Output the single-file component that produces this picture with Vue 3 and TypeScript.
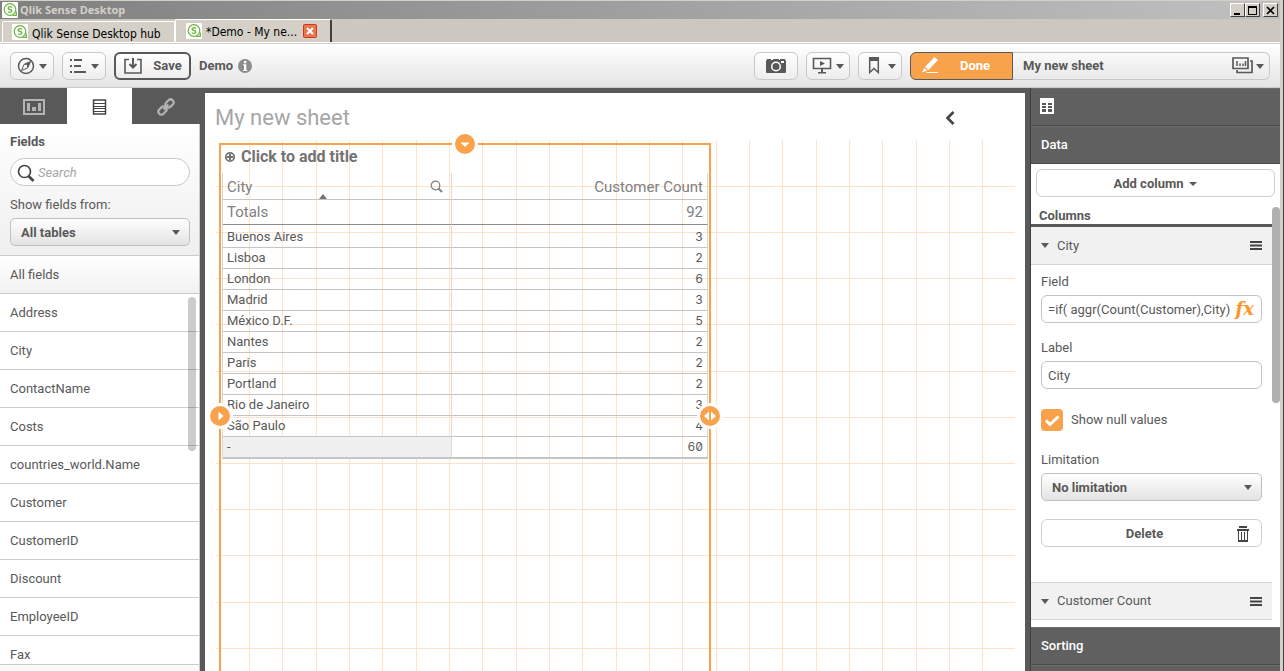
<script setup lang="ts">
import { ref } from 'vue'

interface Row {
  city: string
  count: number
}

const fields: string[] = [
  'Address', 'City', 'ContactName', 'Costs', 'countries_world.Name',
  'Customer', 'CustomerID', 'Discount', 'EmployeeID', 'Fax',
]

const rows: Row[] = [
  { city: 'Buenos Aires', count: 3 },
  { city: 'Lisboa', count: 2 },
  { city: 'London', count: 6 },
  { city: 'Madrid', count: 3 },
  { city: 'México D.F.', count: 5 },
  { city: 'Nantes', count: 2 },
  { city: 'Paris', count: 2 },
  { city: 'Portland', count: 2 },
  { city: 'Rio de Janeiro', count: 3 },
  { city: 'São Paulo', count: 4 },
  { city: '-', count: 60 },
]

const gridColumns = 24
const gridRowHeight = 46.2
const search = ref('')
const fieldExpression = ref('=if( aggr(Count(Customer),City)')
const columnLabel = ref('City')
const showNulls = ref(true)
</script>

<template>
  <div class="window">
    <div class="screen">
      <header class="titlebar">
        <svg class="logo" viewBox="0 0 16 16" aria-hidden="true">
          <rect width="16" height="16" rx="1" fill="#fff" />
          <circle cx="8" cy="7.5" r="5.8" fill="none" stroke="#6cb33f" stroke-width="1.2" />
          <path d="M10.500 13.300h3.800V9.500M10 5.500Q8 4 6.500 5.200Q5.500 6.800 8 7.500Q10.500 8.200 9.500 9.800Q8 11 6 9.700" fill="none" stroke="#6cb33f" stroke-width="1.300" />
        </svg>
        <span class="window-title">Qlik Sense Desktop</span>
        <button class="win-btn" aria-label="Minimize"><svg viewBox="0 0 13 11"><path d="M3 8h6v2H3z" /></svg></button>
        <button class="win-btn" aria-label="Maximize"><svg viewBox="0 0 13 11"><path d="M2 1h9v9H2zM3 3v6h7V3z" fill-rule="evenodd" /></svg></button>
        <button class="win-btn close" aria-label="Close"><svg viewBox="0 0 13 11"><path d="M3 2l7 7M10 2L3 9" stroke="#000" stroke-width="1.700" /></svg></button>
      </header>

      <nav class="tabs">
        <button class="tab">
          <svg class="logo" viewBox="0 0 16 16" aria-hidden="true">
            <rect width="16" height="16" rx="1" fill="#fff" />
            <circle cx="8" cy="7.500" r="5.800" fill="none" stroke="#6cb33f" stroke-width="1.200" />
            <path d="M10.500 13.300h3.800V9.500M10 5.500Q8 4 6.500 5.200Q5.500 6.800 8 7.500Q10.500 8.200 9.500 9.800Q8 11 6 9.700" fill="none" stroke="#6cb33f" stroke-width="1.300" />
          </svg>
          <span>Qlik Sense Desktop hub</span>
        </button>
        <div class="tab active">
          <svg class="logo" viewBox="0 0 16 16" aria-hidden="true">
            <rect width="16" height="16" rx="1" fill="#fff" />
            <circle cx="8" cy="7.500" r="5.800" fill="none" stroke="#6cb33f" stroke-width="1.200" />
            <path d="M10.500 13.300h3.800V9.500M10 5.500Q8 4 6.500 5.200Q5.500 6.800 8 7.500Q10.500 8.200 9.500 9.800Q8 11 6 9.700" fill="none" stroke="#6cb33f" stroke-width="1.300" />
          </svg>
          <span>*Demo - My ne...</span>
          <button class="tab-close" aria-label="Close tab">
            <svg viewBox="0 0 14 14"><rect x=".5" y=".5" width="13" height="13" rx="1" fill="#e4794f" stroke="#d6321c" /><path d="M4 4l6 6M10 4l-6 6" stroke="#fff" stroke-width="2" /></svg>
          </button>
        </div>
      </nav>

      <div class="toolbar">
        <button class="tool" aria-label="Navigation">
          <svg width="18" height="18" viewBox="0 0 18 18"><circle cx="9" cy="9" r="7.500" fill="none" stroke="#595959" stroke-width="1.500" /><path d="M13.500 4.500L10.800 10.800 4.500 13.500 7.200 7.200z" fill="none" stroke="#595959" /><path d="M13.500 4.500L10.800 10.800 7.200 7.200z" fill="#595959" /><circle cx="9" cy="9" r="1.200" fill="#fff" /></svg>
          <i class="caret"></i>
        </button>
        <button class="tool" aria-label="Menu">
          <svg width="18" height="14" viewBox="0 0 18 14"><path d="M1 1h2M1 7h2M1 13h2M5 1h8M5 7h7M5 13h12" stroke="#595959" stroke-width="1.800" /></svg>
          <i class="caret"></i>
        </button>
        <button class="tool save">
          <svg width="20" height="18" viewBox="0 0 20 18"><path d="M6 2.500H2v13.500h16V2.500h-4" fill="none" stroke="#595959" stroke-width="1.600" /><path d="M10 1v9M6.500 7l3.500 3.500L13.500 7" fill="none" stroke="#595959" stroke-width="2" /></svg>
          <span>Save</span>
        </button>
        <span class="app-name">Demo</span>
        <button class="info" aria-label="App information">
          <svg viewBox="0 0 14 14"><circle cx="7" cy="7" r="7" fill="#8c8c8c" /><path d="M6 2h2.300v2.200H6zM5 5.300h3.300V11h1v1H5v-1h1V6.300H5z" fill="#fff" /></svg>
        </button>
        <span class="spacer"></span>
        <button class="tool" aria-label="Snapshot">
          <svg width="20" height="16" viewBox="0 0 20 16"><path d="M1 1h4v1h2V1h6v1h1V1h5v1q1 0 1 1v11q0 1-1 1H1q-1 0-1-1V3q0-1 1-1z" fill="#595959" /><circle cx="10" cy="8.500" r="4.300" fill="none" stroke="#fff" stroke-width="1.500" /><circle cx="10" cy="8.500" r="2.300" fill="#595959" /><path d="M15 3h3v2h-3z" fill="#fff" /></svg>
        </button>
        <button class="tool" aria-label="Stories">
          <svg width="20" height="17" viewBox="0 0 20 17"><path d="M1.500 1.500h17v10h-17z" fill="none" stroke="#595959" stroke-width="1.600" /><path d="M8 4l5 2.500L8 9zM9 12h2v3h3v1.500H6V15h3z" fill="#595959" /></svg>
          <i class="caret"></i>
        </button>
        <button class="tool bookmark" aria-label="Bookmarks">
          <svg width="12" height="17" viewBox="0 0 12 17"><path d="M1.700 1h8.600v14.500L6 11.500l-4.300 4z" fill="none" stroke="#595959" stroke-width="1.500" /><path d="M1 0h10v4H1z" fill="#595959" /></svg>
          <i class="caret"></i>
        </button>
        <div class="sheet-control">
          <button class="done">
            <svg width="18" height="17" viewBox="0 0 18 17"><path d="M13.500 0l3.500 3L7.500 13 4 10zM3.300 11l3 2.500L1 15.500zM6 15h11v1H5z" fill="#fff" /></svg>
            <span>Done</span>
          </button>
          <button class="sheet-picker">
            <span>My new sheet</span>
            <svg width="22" height="17" viewBox="0 0 22 17"><path d="M1 1h15v10.500H1zM18 4h2v11.500H5V13" fill="none" stroke="#595959" stroke-width="1.700" /><path d="M5 4v5M8 6.500V9M11 6.500V9M13.500 4v5" stroke="#595959" stroke-width="1.500" /></svg>
            <i class="caret"></i>
          </button>
        </div>
      </div>

      <main class="workspace">
        <aside class="assets">
          <div class="asset-tabs">
            <button aria-label="Charts">
              <svg width="22" height="16" viewBox="0 0 22 16"><path d="M1 1h20v14H1z" fill="none" stroke="#b3b3b3" stroke-width="2" /><path d="M4 4h3v8H4zM9 8h4v4H9zM15 4h3v8h-3z" fill="#b3b3b3" /></svg>
            </button>
            <button class="active" aria-label="Fields">
              <svg width="15" height="16" viewBox="0 0 15 16"><path d="M1.500 1h12v14h-12z" fill="none" stroke="#454545" stroke-width="1.500" /><path d="M1 4.500h13M1 7.500h13M1 9.500h13M1 12.500h13" stroke="#454545" shape-rendering="crispEdges" /></svg>
            </button>
            <button aria-label="Master items">
              <svg width="18" height="18" viewBox="0 0 18 18"><g transform="rotate(-45 9 9)" fill="none" stroke="#b3b3b3" stroke-width="2.200"><rect x="-.5" y="6" width="9" height="6" rx="3" /><rect x="9.500" y="6" width="9" height="6" rx="3" /><path d="M5.500 9h7" /></g></svg>
            </button>
          </div>
          <div class="field-filter">
            <h2>Fields</h2>
            <label class="search">
              <svg width="18" height="18" viewBox="0 0 18 18"><circle cx="7.500" cy="7.500" r="6" fill="none" stroke="#454545" stroke-width="1.700" /><path d="M11.500 12l5 5" stroke="#454545" stroke-width="2.700" /></svg>
              <input v-model="search" type="text" placeholder="Search" aria-label="Search">
            </label>
            <label for="tables" class="label">Show fields from:</label>
            <div class="select"><select id="tables"><option>All tables</option></select><i class="caret"></i></div>
          </div>
          <div class="all-fields">All fields</div>
          <div class="list-wrap">
            <ul><li v-for="f in fields" :key="f">{{ f }}</li></ul>
            <div class="scroll-thumb"></div>
          </div>
          <div class="list-foot"></div>
        </aside>

        <section class="sheet">
          <div class="sheet-head">
            <h1>My new sheet</h1>
            <button aria-label="Previous sheet"><svg width="10" height="14" viewBox="0 0 10 14"><path d="M8.500 1L2.500 7l6 6" fill="none" stroke="#454545" stroke-width="2.600" /></svg></button>
          </div>
          <div class="canvas">
            <svg class="grid" aria-hidden="true">
              <line v-for="c in gridColumns - 1" :key="'c' + c" :x1="(c * 100) / gridColumns + '%'" :x2="(c * 100) / gridColumns + '%'" y1="0" y2="100%" />
              <line v-for="r in 20" :key="'r' + r" x1="0" x2="100%" :y1="Math.floor(r * gridRowHeight)" :y2="Math.floor(r * gridRowHeight)" />
            </svg>
            <div class="widget">
              <div class="widget-title">
                <svg width="12" height="12" viewBox="0 0 12 12"><circle cx="6" cy="6" r="4.200" fill="none" stroke="#737373" stroke-width="1.800" /><path d="M6 3v6M3 6h6" stroke="#737373" stroke-width="2" /></svg>
                <h3>Click to add title</h3>
              </div>
              <table>
                <colgroup><col class="col-city"><col></colgroup>
                <thead>
                  <tr class="names">
                    <th>
                      <div class="th-inner">City
                        <svg width="13" height="13" viewBox="0 0 13 13"><circle cx="5.500" cy="5.500" r="4.300" fill="none" stroke="#808080" stroke-width="1.200" /><path d="M8.500 8.500l3.500 3.500" stroke="#808080" stroke-width="2" /></svg>
                      </div>
                      <i class="sort"></i>
                    </th>
                    <th class="right">Customer Count</th>
                  </tr>
                  <tr class="totals"><th>Totals</th><th class="right">92</th></tr>
                </thead>
                <tbody>
                  <tr v-for="r in rows" :key="r.city"><td>{{ r.city }}</td><td class="num">{{ r.count }}</td></tr>
                </tbody>
              </table>
              <button class="handle top" aria-label="Resize from top"><svg viewBox="0 0 26 26"><circle cx="13" cy="13" r="10" /><path d="M8.500 11.500h9L13 16z" /></svg></button>
              <button class="handle left" aria-label="Resize from left"><svg viewBox="0 0 26 26"><circle cx="13" cy="13" r="10" /><path d="M11.500 8.500v9l5-4.500z" /></svg></button>
              <button class="handle right-side" aria-label="Resize from right"><svg viewBox="0 0 26 26"><circle cx="13" cy="13" r="10" /><path d="M12 8.500v9L7 13zM14 8.500v9l5-4.500z" /></svg></button>
            </div>
          </div>
        </section>

        <aside class="props">
          <div class="bar icon-bar">
            <svg width="14" height="16" viewBox="0 0 14 16" shape-rendering="crispEdges"><path d="M0 0h14v16H0z" fill="#fff" /><path d="M2 5h4v2H2zM8 5h4v2H8zM2 8h4v2H2zM8 8h4v2H8zM2 11h4v3H2zM8 11h4v3H8z" fill="#595959" /></svg>
          </div>
          <button class="bar">Data</button>
          <div class="props-body">
            <div class="add-area"><button class="plain">Add column <i class="caret small"></i></button></div>
            <h2>Columns</h2>
            <div class="scroll-area">
              <button class="section">
                <i class="caret"></i><span>City</span>
                <svg width="12" height="9" viewBox="0 0 12 9"><path d="M0 1h12M0 4.500h12M0 8h12" stroke="#454545" stroke-width="2" /></svg>
              </button>
              <div class="form">
                <label for="field">Field</label>
                <div class="expr"><input id="field" v-model="fieldExpression" type="text"><button aria-label="Edit expression">fx</button></div>
                <label for="label" class="gap">Label</label>
                <input id="label" v-model="columnLabel" class="box" type="text">
                <label class="check">
                  <input v-model="showNulls" type="checkbox">
                  <span class="tick"><svg viewBox="0 0 22 22"><path d="M5 11.500l4 4 8.500-8" fill="none" stroke="#fff" stroke-width="3" /></svg></span>
                  Show null values
                </label>
                <label for="limit">Limitation</label>
                <div class="select"><select id="limit"><option>No limitation</option></select><i class="caret"></i></div>
                <button class="plain delete">
                  <span>Delete</span>
                  <svg width="12" height="16" viewBox="0 0 12 16" shape-rendering="crispEdges"><path d="M2 0h8v2H2zM0 3h12v2H0zM1 5h1v10H1zM10 5h1v10h-1zM1 14h10v2H1zM4 6h1v8H4zM7 6h1v8H7z" fill="#454545" /></svg>
                </button>
              </div>
              <button class="section second">
                <i class="caret"></i><span>Customer Count</span>
                <svg width="12" height="9" viewBox="0 0 12 9"><path d="M0 1h12M0 4.500h12M0 8h12" stroke="#454545" stroke-width="2" /></svg>
              </button>
            </div>
            <div class="scroll-thumb"></div>
          </div>
          <button class="bar">Sorting</button>
          <div class="bar next"></div>
        </aside>
      </main>
    </div>
  </div>
</template>

<style>
body { background: #d4d0c8; overflow: hidden; }
</style>

<style scoped>
* { box-sizing: border-box; }
.window {
  height: 100vh; padding-right: 1px; background: #404040;
  font: 13px/20px Roboto, "Open Sans", sans-serif; color: #595959;
}
.screen { height: 100%; display: flex; flex-direction: column; border-top: 1px solid #d4d0c8; border-right: 3px solid #d4d0c8; background: #d4d0c8; }
button, input, select { font: inherit; color: inherit; margin: 0; padding: 0; border: 0; background: none; }
svg { flex: none; display: block; }
h1, h2, h3, ul { margin: 0; padding: 0; list-style: none; }
.logo { width: 16px; height: 16px; }

.titlebar { height: 18px; flex: none; display: flex; align-items: center; padding: 0 2px; background: linear-gradient(90deg, #808080, #c0c0c0); }
.window-title { flex: 1; margin-left: 2px; font: bold 11px/18px "Noto Sans", "DejaVu Sans", sans-serif; color: #d4d0c8; }
.win-btn { width: 15px; height: 14px; background: #d4d0c8; border: 1px solid; border-color: #fff #404040 #404040 #fff; }
.win-btn svg { width: 13px; height: 11px; }
.win-btn.close { margin-left: 3px; }

.tabs { height: 24px; flex: none; display: flex; align-items: flex-end; padding-left: 2px; background: #ccc8c0; border-bottom: 1px solid #fff; font: 12px/20px "DejaVu Sans Condensed", "Noto Sans", sans-serif; color: #000; }
.tab { height: 21px; width: 173px; display: flex; align-items: center; gap: 4px; padding-left: 9px; background: #d4d0c8; border: 1px solid #fff; border-bottom: 0; border-radius: 2px 2px 0 0; white-space: nowrap; }
.tab span { padding-top: 3px; }
.tab.active { width: 157px; height: 23px; padding-left: 10px; padding-bottom: 1px; border-right: 2px solid #404040; }
.tab-close { width: 14px; height: 14px; margin-left: 2px; }

.toolbar { height: 45px; flex: none; display: flex; align-items: center; gap: 8px; padding: 0 10px; background: linear-gradient(#fff, #e4e4e4); border-top: 1px solid #d4d0c8; border-bottom: 1px solid #ccc; }
.toolbar span { padding-top: 1px; }
.tool { height: 28px; width: 44px; flex: none; display: flex; align-items: center; justify-content: center; gap: 4px; border: 1px solid #c8c8c8; border-radius: 6px; background: linear-gradient(#fff, #ededed); }
.tool .caret, .sheet-picker .caret { margin-top: 1px; }
.bookmark { gap: 8px; padding-left: 4px; }
.save { width: 77px; gap: 10px; border: 2px solid #595959; font-weight: bold; }
.app-name { font-weight: bold; }
.info { width: 14px; height: 14px; margin-left: -3px; }
.spacer { flex: 1; }
.caret { flex: none; width: 0; height: 0; border: 4px solid transparent; border-top: 5px solid #595959; border-bottom: 0; }
.sheet-control { width: 360px; height: 28px; display: flex; }
.done { width: 103px; display: flex; align-items: center; padding-left: 10px; gap: 21px; color: #fff; font-weight: bold; background: #f8a24c; border: 1px solid #595959; border-radius: 6px 0 0 6px; }
.sheet-picker { flex: 1; display: flex; align-items: center; gap: 2px; padding: 0 5px 0 10px; border: 1px solid #c8c8c8; border-left: 0; border-radius: 0 6px 6px 0; font-weight: bold; }
.sheet-picker span { flex: 1; text-align: left; }

.workspace { flex: 1; min-height: 0; display: flex; background: #595959; }
.assets { width: 200px; flex: none; display: flex; flex-direction: column; background: #fff; border-right: 1px solid #ccc; }
.asset-tabs { display: grid; grid-template-columns: 67px 65px 1fr; height: 36px; flex: none; margin-right: -1px; }
.asset-tabs button { display: flex; align-items: center; justify-content: center; padding-top: 2px; background: #595959; }
.asset-tabs .active { background: #fff; }
.field-filter { flex: none; padding: 8px 9px 9px 10px; background: linear-gradient(#fff, #efefef); border-bottom: 1px solid #ccc; }
h2 { font-size: 13px; line-height: 20px; }
.search { display: flex; align-items: center; gap: 3px; height: 28px; margin-top: 6px; padding: 1px 6px 0; border: 1px solid #c8c8c8; border-radius: 14px; background: #fff; }
.search input { flex: 1; min-width: 0; outline: 0; }
.search input::placeholder { color: #a6a6a6; font-style: italic; opacity: 1; }
.label { display: block; margin: 9px 0 3px; }
.select { position: relative; height: 28px; }
.select select { appearance: none; width: 100%; height: 28px; padding: 1px 10px 0; font-weight: bold; border: 1px solid #c0c0c0; border-radius: 5px; background: linear-gradient(#fff, #e3e3e3); }
.select .caret { position: absolute; right: 10px; top: 12px; }
.all-fields { height: 38px; flex: none; padding-left: 10px; line-height: 37px; border-bottom: 1px solid #ccc; background: linear-gradient(#fff, #f1f1f1); }
.list-wrap { position: relative; flex: 1; min-height: 0; overflow: hidden; }
.list-wrap li { height: 38px; padding-left: 10px; line-height: 37px; border-bottom: 1px solid #ccc; }
.list-wrap .scroll-thumb { position: absolute; top: 3px; right: 3px; width: 8px; height: 154px; border-radius: 4px; background: #0003; }
.list-foot { height: 7px; flex: none; border-top: 1px solid #ccc; background: #fafafa; }

.sheet { flex: 1; min-width: 0; margin: 5px 5px 0; padding: 0 10px; display: flex; flex-direction: column; background: #fff; }
.sheet-head { height: 46px; flex: none; display: flex; align-items: center; justify-content: space-between; padding: 3px 60px 0 0; }
h1 { font-size: 22px; line-height: 28px; font-weight: normal; color: #a6a6a6; }
.canvas { position: relative; flex: 1; min-height: 0; padding: 4px 0 0 4px; clip-path: inset(-20px -20px 0 -20px); }
.grid { position: absolute; inset: 0; width: 100%; height: 100%; stroke: #fde3cc; shape-rendering: crispEdges; }
.grid line { transform: translate(1px, 1px); }
.widget { position: relative; width: 62%; max-width: 492px; height: 546px; border: 2px solid #f8a24c; }
.widget-title { height: 27px; display: flex; align-items: center; gap: 5px; padding: 0 3px 4px; color: #737373; }
h3 { font-size: 16px; line-height: 22px; }
table { width: calc(100% - 2px); margin: 1px 1px 0; border-collapse: separate; border-spacing: 0; table-layout: fixed; border-left: 1px solid #d9d9d9; border-bottom: 1px solid #c4c4c4; }
.col-city { width: 229px; }
th, td { padding: 0 4px; height: 21px; line-height: 20px; border-bottom: 1px solid #c4c4c4; border-right: 1px solid #d9d9d9; text-align: left; font-weight: normal; }
th { position: relative; height: 27px; font-size: 15px; color: #808080; }
.names th { padding-top: 1px; }
.totals th { height: 25px; border-bottom-color: #8c8c8c; }
.right, .num { text-align: right; }
.num { font-family: Inter, sans-serif; font-size: 12px; font-feature-settings: "zero", "tnum"; }
.th-inner { display: flex; align-items: center; justify-content: space-between; padding-right: 4px; }
.sort { position: absolute; bottom: 0; left: calc(50% - 18px); border: 4px solid transparent; border-bottom: 5px solid #737373; border-top: 0; }
tbody tr:first-child td { height: 23px; padding-top: 2px; }
tbody tr:last-child td:first-child { background: #f0f0f0; }
.handle { position: absolute; width: 26px; height: 26px; border-radius: 50%; background: #fff; fill: #fff; }
.handle circle { fill: #f8a24c; }
.handle.top { top: -14px; left: calc(50% - 13px); }
.handle.left { left: -14px; top: calc(50% - 13px); }
.handle.right-side { right: -14px; top: calc(50% - 13px); }

.props { width: 250px; flex: none; display: flex; flex-direction: column; border-left: 1px solid #404040; background: #595959; }
.bar { height: 38px; flex: none; display: flex; align-items: center; padding: 0 10px; color: #fff; background: #606060; border-top: 1px solid #6c6c6c; border-bottom: 1px solid #4a4a4a; font-weight: 500; }
.icon-bar { padding: 0 9px 2px; }
.bar.next { height: 6px; border-bottom: 0; }
.props-body { position: relative; flex: 1; min-height: 0; display: flex; flex-direction: column; background: #fff; }
.add-area { padding: 5px 5px 8px; }
.plain { width: 100%; height: 28px; display: flex; align-items: center; justify-content: center; gap: 6px; padding-top: 1px; font-weight: bold; background: #fff; border: 1px solid #d0d0d0; border-radius: 6px; }
.caret.small { border-width: 4px 4px 0; }
.props h2 { flex: none; height: 22px; padding-left: 8px; margin-right: 8px; border-bottom: 3px solid #595959; line-height: 22px; }
.scroll-area { flex: 1; min-height: 0; margin-right: 8px; overflow: hidden; }
.section { width: 100%; height: 38px; display: flex; align-items: center; gap: 8px; padding: 0 10px; background: #f1f1f1; border-bottom: 1px solid #d4d4d4; }
.section span { flex: 1; text-align: left; }
.second { border-top: 1px solid #d4d4d4; }
.form { padding: 6px 10px 35px; }
.form > label { display: block; padding: 1px 0 3px; }
.form > .gap { margin-top: 14px; }
.box, .expr { width: 100%; height: 28px; border: 1px solid #c4c4c4; border-radius: 6px; }
.box { display: block; padding: 0 6px; }
.expr { display: flex; padding: 0 7px 0 6px; }
.expr input { flex: 1; min-width: 0; padding-top: 1px; }
.expr button { font: italic bold 22px/24px "DejaVu Serif", serif; font-size: 18px; color: #ff9326; }
.form > .check { position: relative; display: flex; align-items: center; gap: 8px; margin: 20px 0 18px; padding: 0; }
.check input { position: absolute; width: 22px; height: 22px; opacity: 0; }
.tick { width: 22px; height: 22px; background: #f8a24c; border-radius: 4px; }
.delete { position: relative; margin-top: 18px; padding-right: 14px; }
.delete svg { position: absolute; right: 12px; }
.props-body > .scroll-thumb { position: absolute; top: 43px; right: 0; width: 8px; height: 196px; border-radius: 4px; background: #b0b0b0; }
</style>
